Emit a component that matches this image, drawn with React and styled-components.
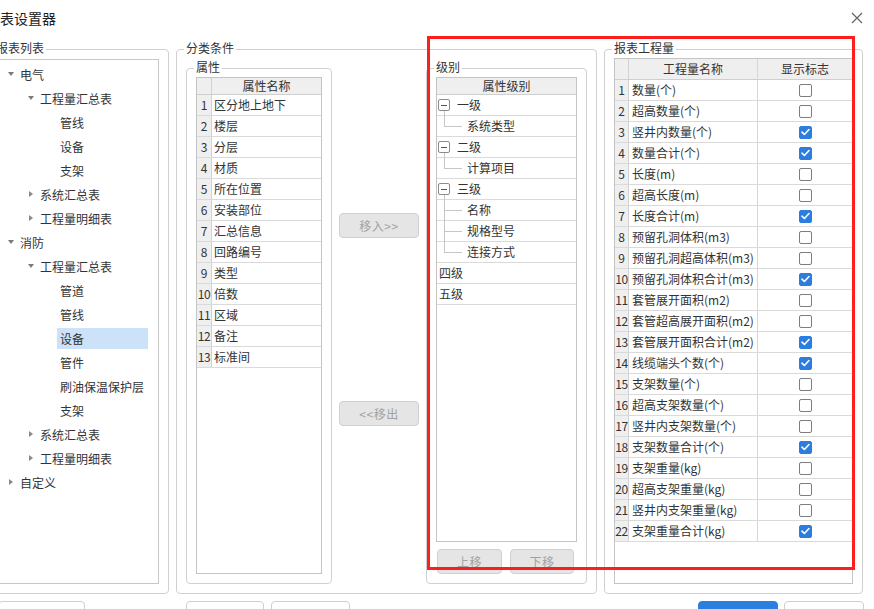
import styled, { createGlobalStyle } from "styled-components";

const GlobalStyle = createGlobalStyle`
  html, body { margin: 0; padding: 0; background: #fff; }
  body {
    overflow: hidden;
    font-family: "Noto Sans CJK SC", "Noto Sans", sans-serif;
    font-size: 12px;
    color: #333;
  }
`;

const Page = styled.div`
  position: relative;
  width: 874px;
  height: 609px;
  overflow: hidden;
  background: #fff;
`;

const Dialog = styled.div`
  margin-left: -14px;
  width: 888px;
  display: flex;
  flex-direction: column;
`;

const TitleBar = styled.div`
  height: 36px;
  display: flex;
  align-items: center;
  justify-content: space-between;
  padding-right: 11px;
  box-sizing: border-box;
`;

const Title = styled.div`
  font-size: 14px;
  line-height: 18px;
  color: #222;
`;

const Main = styled.div`
  margin-top: 13px;
  height: 545px;
  display: flex;
  gap: 7px;
`;

const GroupBox = styled.div`
  position: relative;
  box-sizing: border-box;
  width: ${(p) => p.$w}px;
  border: 1px solid #d0d0d0;
  border-radius: 4px;
  padding: ${(p) => p.$pad || "9px"};
  display: flex;
  flex-direction: ${(p) => p.$dir || "column"};
  gap: ${(p) => p.$gap || 0}px;
`;

const Legend = styled.span`
  position: absolute;
  top: -11px;
  left: 7px;
  padding: 0 2px;
  background: #fff;
  line-height: 17px;
  color: #333;
`;

const TreeBox = styled.div`
  flex: 1;
  border: 1px solid #c8c8c8;
  background: #fff;
  padding-top: 2px;
`;

const TreeRow = styled.div`
  height: 24px;
  display: flex;
  align-items: center;
  padding-left: ${(p) => 9 + p.$level * 20}px;
`;

const Caret = styled.span`
  width: 10px;
  height: 10px;
  margin-right: 4px;
  display: flex;
  align-items: center;
  justify-content: center;
  &::before {
    content: "";
    display: ${(p) => (p.$dir ? "block" : "none")};
    width: 0;
    height: 0;
    ${(p) =>
      p.$dir === "down"
        ? "border-left: 3px solid transparent; border-right: 3px solid transparent; border-top: 4px solid #7a7a7a;"
        : "border-top: 3.5px solid transparent; border-bottom: 3.5px solid transparent; border-left: 4px solid #8a8a8a;"}
  }
`;

const TreeLabel = styled.span`
  height: 21px;
  line-height: 21px;
  padding: 0 3px;
  margin-left: -3px;
  box-sizing: border-box;
  width: ${(p) => (p.$sel ? "91px" : "auto")};
  background: ${(p) => (p.$sel ? "#cce2f8" : "transparent")};
  color: #333;
`;

const ListBox = styled.div`
  flex: 1;
  border: 1px solid #c4c4c4;
  background: #fff;
`;

const GridRow = styled.div`
  display: grid;
  grid-template-columns: ${(p) => p.$cols};
  height: ${(p) => p.$h || 21}px;
  box-sizing: border-box;
  border-bottom: 1px solid ${(p) => (p.$head ? "#cfcfcf" : "#dadada")};
  background: ${(p) => (p.$head ? "#efefef" : "#fff")};
`;

const Cell = styled.div`
  display: flex;
  align-items: center;
  justify-content: ${(p) => (p.$center ? "center" : "flex-start")};
  padding-left: ${(p) => p.$pl || 0}px;
  border-right: ${(p) => (p.$line ? "1px solid #d6d6d6" : "none")};
  line-height: 20px;
  white-space: nowrap;
  overflow: hidden;
`;

const NumCell = styled(Cell)`
  justify-content: center;
  background: #efefef;
  border-right: 1px solid #d2d2d2;
  letter-spacing: -0.4px;
`;

const ButtonColumn = styled.div`
  width: 80px;
  flex: none;
  display: flex;
  flex-direction: column;
  padding-top: 145px;
  gap: 163px;
`;

const GrayButton = styled.div`
  width: ${(p) => p.$w || 80}px;
  height: 25px;
  box-sizing: border-box;
  border: 1px solid #d0d0d0;
  border-radius: 4px;
  background: #e5e5e5;
  color: #a2a2a2;
  display: flex;
  align-items: center;
  justify-content: center;
  letter-spacing: 0.5px;
`;

const MoveRow = styled.div`
  margin-top: 7px;
  padding-left: 1px;
  display: flex;
  gap: 8px;
`;

const LevelRow = styled.div`
  position: relative;
  height: 21px;
  box-sizing: border-box;
  border-bottom: 1px solid #dadada;
  display: flex;
  align-items: center;
  padding-left: ${(p) => p.$pl || 0}px;
  line-height: 20px;
`;

const Toggle = styled.span`
  position: relative;
  width: 12px;
  height: 12px;
  margin-left: 1px;
  margin-right: 7px;
  box-sizing: border-box;
  border: 1px solid #8c8c8c;
  border-radius: 2px;
  background: #fff;
  &::before {
    content: "";
    position: absolute;
    left: 2px;
    right: 2px;
    top: 4.5px;
    height: 1px;
    background: #555;
  }
  &::after {
    content: "";
    position: absolute;
    left: 5px;
    top: 11px;
    width: 1px;
    height: 6px;
    background: #c6c6c6;
  }
`;

const Guide = styled.span`
  position: relative;
  align-self: stretch;
  width: 30px;
  flex: none;
  &::before {
    content: "";
    position: absolute;
    left: 7px;
    top: -1px;
    width: 1px;
    height: ${(p) => (p.$last ? "calc(50% + 1px)" : "calc(100% + 2px)")};
    background: #c6c6c6;
  }
  &::after {
    content: "";
    position: absolute;
    left: 7px;
    top: 50%;
    width: 18px;
    height: 1px;
    background: #c6c6c6;
  }
`;

const Check = styled.span`
  width: 13px;
  height: 13px;
  box-sizing: border-box;
  border-radius: 2px;
  border: 1px solid ${(p) => (p.$on ? "#2b7de0" : "#7d7d7d")};
  background: ${(p) => (p.$on ? "#2b7de0" : "#fff")};
  display: flex;
  align-items: center;
  justify-content: center;
`;

const Annotation = styled.div`
  position: absolute;
  left: 427px;
  top: 36px;
  width: 428px;
  height: 534px;
  box-sizing: border-box;
  border: 3px solid #fd1e1e;
  pointer-events: none;
`;

const BottomRow = styled.div`
  margin-top: 7px;
  height: 26px;
  display: flex;
  justify-content: space-between;
  padding-right: 10px;
`;

const Cluster = styled.div`
  display: flex;
`;

const FootButton = styled.div`
  width: ${(p) => p.$w}px;
  margin-left: ${(p) => p.$ml || 0}px;
  height: 26px;
  box-sizing: border-box;
  border: 1px solid ${(p) => (p.$primary ? "#2b7fe0" : "#cfcfcf")};
  background: ${(p) => (p.$primary ? "#2b7fe0" : "#fff")};
  border-radius: 4px;
`;

const tree = [
  { l: 0, t: "电气", c: "down" },
  { l: 1, t: "工程量汇总表", c: "down" },
  { l: 2, t: "管线" },
  { l: 2, t: "设备" },
  { l: 2, t: "支架" },
  { l: 1, t: "系统汇总表", c: "right" },
  { l: 1, t: "工程量明细表", c: "right" },
  { l: 0, t: "消防", c: "down" },
  { l: 1, t: "工程量汇总表", c: "down" },
  { l: 2, t: "管道" },
  { l: 2, t: "管线" },
  { l: 2, t: "设备", sel: true },
  { l: 2, t: "管件" },
  { l: 2, t: "刷油保温保护层" },
  { l: 2, t: "支架" },
  { l: 1, t: "系统汇总表", c: "right" },
  { l: 1, t: "工程量明细表", c: "right" },
  { l: 0, t: "自定义", c: "right" },
];

const attrs = [
  "区分地上地下", "楼层", "分层", "材质", "所在位置", "安装部位", "汇总信息",
  "回路编号", "类型", "倍数", "区域", "备注", "标准间",
];

const levels = [
  { t: "一级", parent: true },
  { t: "系统类型", last: true },
  { t: "二级", parent: true },
  { t: "计算项目", last: true },
  { t: "三级", parent: true },
  { t: "名称" },
  { t: "规格型号" },
  { t: "连接方式", last: true },
  { t: "四级", top: true },
  { t: "五级", top: true },
];

const quantities = [
  ["数量(个)", false],
  ["超高数量(个)", false],
  ["竖井内数量(个)", true],
  ["数量合计(个)", true],
  ["长度(m)", false],
  ["超高长度(m)", false],
  ["长度合计(m)", true],
  ["预留孔洞体积(m3)", false],
  ["预留孔洞超高体积(m3)", false],
  ["预留孔洞体积合计(m3)", true],
  ["套管展开面积(m2)", false],
  ["套管超高展开面积(m2)", false],
  ["套管展开面积合计(m2)", true],
  ["线缆端头个数(个)", true],
  ["支架数量(个)", false],
  ["超高支架数量(个)", false],
  ["竖井内支架数量(个)", false],
  ["支架数量合计(个)", true],
  ["支架重量(kg)", false],
  ["超高支架重量(kg)", false],
  ["竖井内支架重量(kg)", false],
  ["支架重量合计(kg)", true],
];

const CloseIcon = () => (
  <svg width="12" height="12" viewBox="0 0 12 12">
    <path d="M1 1L11 11M11 1L1 11" stroke="#666" strokeWidth="1.2" fill="none" />
  </svg>
);

const Tick = () => (
  <svg width="9" height="8" viewBox="0 0 9 8">
    <path d="M1 4.2L3.4 6.5L8 1.5" stroke="#fff" strokeWidth="1.6" fill="none" strokeLinecap="round" strokeLinejoin="round" />
  </svg>
);

export default function App() {
  return (
    <Page>
      <GlobalStyle />
      <Dialog>
        <TitleBar>
          <Title>报表设置器</Title>
          <CloseIcon />
        </TitleBar>

        <Main>
          <GroupBox $w={183}>
            <Legend>报表列表</Legend>
            <TreeBox>
              {tree.map((n, i) => (
                <TreeRow key={i} $level={n.l}>
                  <Caret $dir={n.c} />
                  <TreeLabel $sel={n.sel}>{n.t}</TreeLabel>
                </TreeRow>
              ))}
            </TreeBox>
          </GroupBox>

          <GroupBox $w={421} $dir="row" $gap={7} $pad="18px 9px 9px 9px">
            <Legend>分类条件</Legend>

            <GroupBox $w={146} $pad="8px 9px 9px 9px">
              <Legend>属性</Legend>
              <ListBox>
                <GridRow $head $h={17} $cols="15px 1fr">
                  <NumCell />
                  <Cell $center>属性名称</Cell>
                </GridRow>
                {attrs.map((a, i) => (
                  <GridRow key={a} $cols="15px 1fr">
                    <NumCell>{i + 1}</NumCell>
                    <Cell $pl={2}>{a}</Cell>
                  </GridRow>
                ))}
              </ListBox>
            </GroupBox>

            <ButtonColumn>
              <GrayButton>移入&gt;&gt;</GrayButton>
              <GrayButton>&lt;&lt;移出</GrayButton>
            </ButtonColumn>

            <GroupBox $w={161} $pad="8px 9px 9px 9px">
              <Legend>级别</Legend>
              <ListBox>
                <GridRow $head $h={17} $cols="1fr">
                  <Cell $center>属性级别</Cell>
                </GridRow>
                {levels.map((lv, i) =>
                  lv.parent ? (
                    <LevelRow key={i}>
                      <Toggle />
                      {lv.t}
                    </LevelRow>
                  ) : lv.top ? (
                    <LevelRow key={i} $pl={2}>
                      {lv.t}
                    </LevelRow>
                  ) : (
                    <LevelRow key={i}>
                      <Guide $last={lv.last} />
                      {lv.t}
                    </LevelRow>
                  )
                )}
              </ListBox>
              <MoveRow>
                <GrayButton $w={65}>上移</GrayButton>
                <GrayButton $w={64}>下移</GrayButton>
              </MoveRow>
            </GroupBox>
          </GroupBox>

          <GroupBox $w={259} $pad="8px 9px 9px 9px">
            <Legend>报表工程量</Legend>
            <ListBox>
              <GridRow $head $h={21} $cols="14px 129px 1fr">
                <NumCell />
                <Cell $center $line>工程量名称</Cell>
                <Cell $center>显示标志</Cell>
              </GridRow>
              {quantities.map(([name, on], i) => (
                <GridRow key={name} $cols="14px 129px 1fr">
                  <NumCell>{i + 1}</NumCell>
                  <Cell $pl={3} $line>{name}</Cell>
                  <Cell $center>
                    <Check $on={on}>{on && <Tick />}</Check>
                  </Cell>
                </GridRow>
              ))}
            </ListBox>
          </GroupBox>
        </Main>

        <BottomRow>
          <Cluster>
            <FootButton $w={87} $ml={12} />
            <FootButton $w={78} $ml={101} />
            <FootButton $w={79} $ml={7} />
          </Cluster>
          <Cluster>
            <FootButton $w={80} $primary />
            <FootButton $w={80} $ml={6} />
          </Cluster>
        </BottomRow>
      </Dialog>
      <Annotation />
    </Page>
  );
}
